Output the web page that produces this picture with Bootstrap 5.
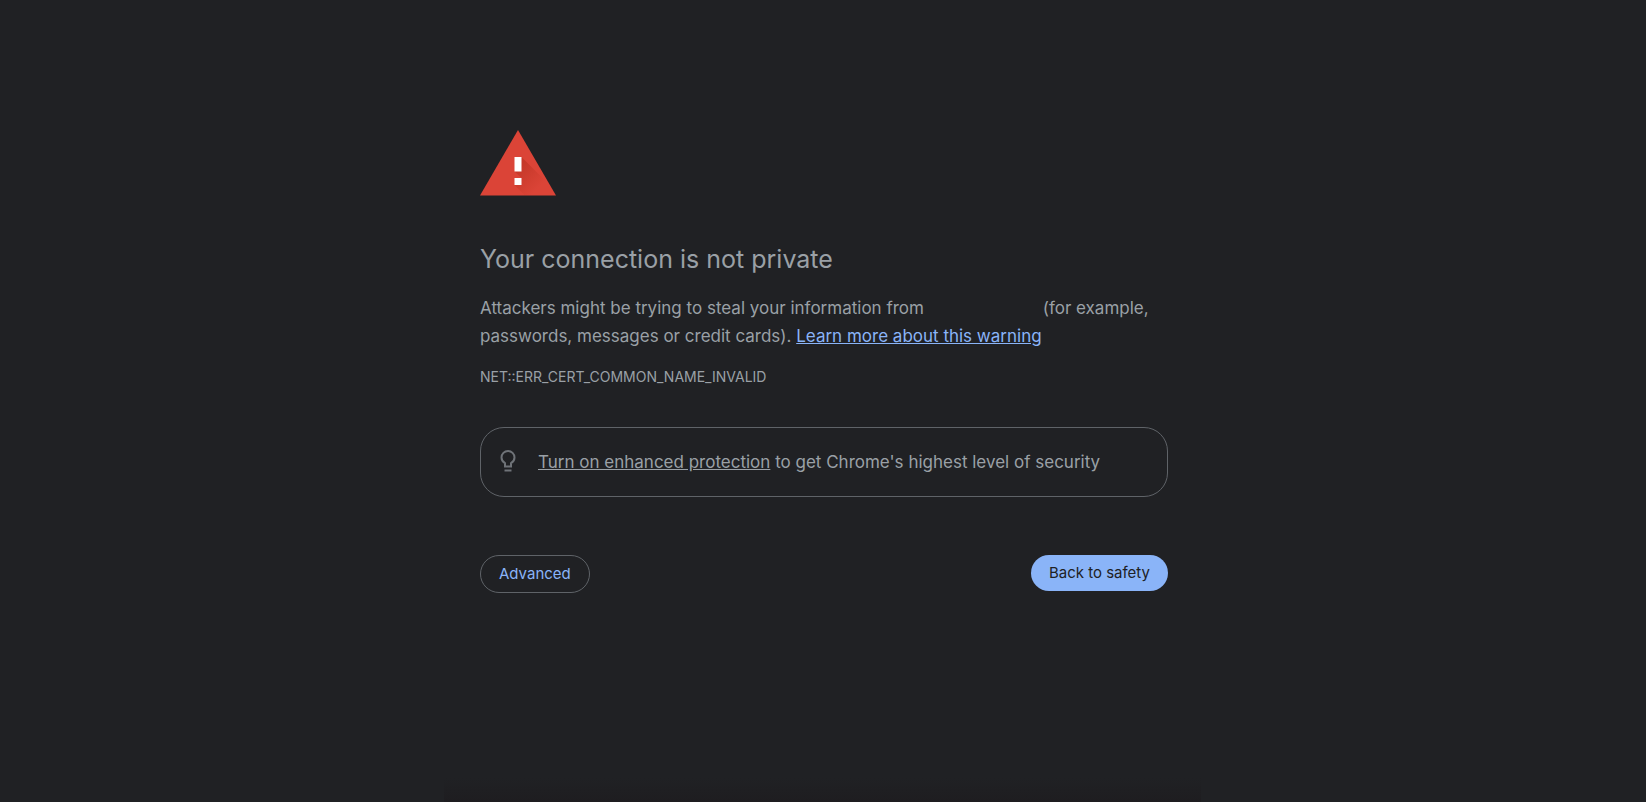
<!DOCTYPE html>
<html lang="en">
<head>
<meta charset="utf-8">
<meta name="viewport" content="width=device-width, initial-scale=1">
<title>Privacy error</title>
<link href="https://cdn.jsdelivr.net/npm/bootstrap@5.3.0/dist/css/bootstrap.min.css" rel="stylesheet">
<style>
  body { background: #202124 linear-gradient(#202124, #1e1d20) no-repeat center bottom / 46% 24px; color: #9aa0a6; font-family: Inter, "Liberation Sans", sans-serif; font-size: 17px; line-height: 28px; }
  .interstitial { max-width: 690px; padding: 130px 0 0 2px; }
  .interstitial h1 { font-size: 25px; line-height: 32px; font-weight: 400; margin: 47px 0 19px; }
  .learn-more { color: #8ab4f8; }
  .after-site { margin-left: 114px; }
  .error-code { font-size: 14px; line-height: 20px; margin-top: 17px; }
  .promo { border: 1px solid #5f6368; border-radius: 24px; padding: 20px 18px; margin: 40px 0 58px; gap: 21px; }
  .promo a { color: inherit; }
  .promo svg { color: #6f7378; }
  .action { font-size: 15px; line-height: 20px; padding: 8px 18px; }
  .action-outline { --bs-btn-color: #8ab4f8; --bs-btn-border-color: #5f6368; --bs-btn-hover-color: #8ab4f8; --bs-btn-hover-border-color: #8ab4f8; }
  .action-main { border: 0; --bs-btn-color: #202124; --bs-btn-bg: #8ab4f8; --bs-btn-hover-bg: #a1c3fa; }
</style>
</head>
<body class="min-vh-100">
<main class="interstitial container-fluid mx-auto">
  <svg class="d-block" width="76" height="66" viewBox="0 0 76 66" aria-hidden="true">
    <defs><linearGradient id="shade" gradientUnits="userSpaceOnUse" x1="38" y1="38" x2="58" y2="58"><stop offset="0" stop-color="#a52714" stop-opacity=".4"/><stop offset="1" stop-color="#a52714" stop-opacity="0"/></linearGradient></defs>
    <path d="M38 0 76 65.500H0Z" fill="#db4437"/>
    <path d="M41.500 27 76 61.500V65.500H45L34.500 55l7-7-7-6.500Z" fill="url(#shade)"/>
    <path d="M34.500 27h7v14.500h-7ZM34.500 48h7v7h-7Z" fill="#fff"/>
  </svg>
  <h1>Your connection is not private</h1>
  <p class="mb-0">Attackers might be trying to steal your information from <span class="after-site">(for example,</span> passwords, messages or credit cards). <a class="learn-more" href="#">Learn more about this warning</a></p>
  <div class="error-code">NET::ERR_CERT_COMMON_NAME_INVALID</div>
  <div class="promo d-flex align-items-center">
    <svg class="flex-shrink-0" width="18" height="24" viewBox="0 0 18 24" fill="none" stroke="currentColor" stroke-width="2" aria-hidden="true">
      <path d="M6 16.500h6v-3.300c2-1.200 3.500-3.200 3.500-5.700a6.500 6.500 0 0 0-13 0c0 2.500 1.500 4.500 3.500 5.700Z"/><path d="M5.500 20.500h7"/>
    </svg>
    <div><a href="#">Turn on enhanced protection</a> to get Chrome's highest level of security</div>
  </div>
  <div class="d-flex justify-content-between align-items-start">
    <button type="button" class="btn rounded-pill action action-outline">Advanced</button>
    <button type="button" class="btn rounded-pill action action-main">Back to safety</button>
  </div>
</main>
<script src="https://cdn.jsdelivr.net/npm/bootstrap@5.3.0/dist/js/bootstrap.bundle.min.js"></script>
</body>
</html>
